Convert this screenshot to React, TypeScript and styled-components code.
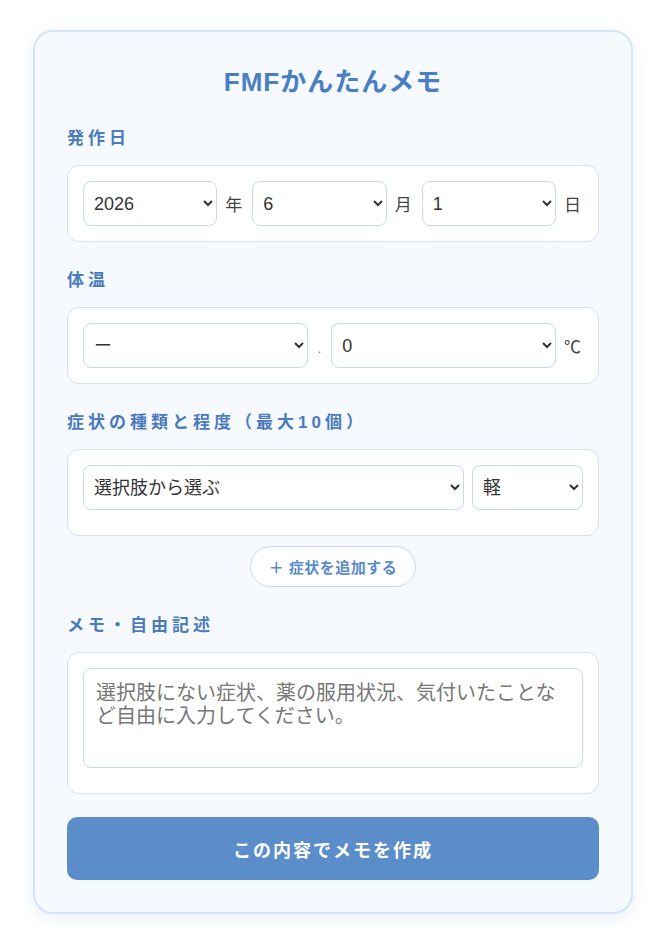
import styled, { createGlobalStyle } from 'styled-components';
import { useState } from 'react';

const GlobalStyle = createGlobalStyle`
    body {
        margin: 0;
        padding: 30px 0;
        background: #ffffff;
        font-family: 'Liberation Sans', 'Noto Sans CJK JP', sans-serif;
        color: #333;
    }
`;

const years = ['2024', '2025', '2026'];
const months = Array.from({ length: 12 }, (_, i) => String(i + 1));
const days = Array.from({ length: 31 }, (_, i) => String(i + 1));
const tempInts = ['ー', '35', '36', '37', '38', '39', '40', '41'];
const tempDecs = Array.from({ length: 10 }, (_, i) => String(i));
const levels = ['軽', '中', '重'];

const App = () => {
    const [year, setYear] = useState('2026');
    const [month, setMonth] = useState('6');
    const [day, setDay] = useState('1');

    return (
        <>
            <GlobalStyle />
            <Card>
                <Title>FMFかんたんメモ</Title>

                <SectionLabel>発作日</SectionLabel>
                <Panel>
                    <Row>
                        <Select value={year} onChange={(e) => setYear(e.target.value)}>
                            {years.map((y) => (
                                <option key={y}>{y}</option>
                            ))}
                        </Select>
                        <Unit>年</Unit>
                        <Select value={month} onChange={(e) => setMonth(e.target.value)}>
                            {months.map((m) => (
                                <option key={m}>{m}</option>
                            ))}
                        </Select>
                        <Unit>月</Unit>
                        <Select value={day} onChange={(e) => setDay(e.target.value)}>
                            {days.map((d) => (
                                <option key={d}>{d}</option>
                            ))}
                        </Select>
                        <Unit>日</Unit>
                    </Row>
                </Panel>

                <SectionLabel>体温</SectionLabel>
                <Panel>
                    <Row>
                        <Select defaultValue='ー'>
                            {tempInts.map((t) => (
                                <option key={t}>{t}</option>
                            ))}
                        </Select>
                        <Dot>.</Dot>
                        <Select defaultValue='0'>
                            {tempDecs.map((t) => (
                                <option key={t}>{t}</option>
                            ))}
                        </Select>
                        <Unit>℃</Unit>
                    </Row>
                </Panel>

                <SectionLabel>症状の種類と程度（最大10個）</SectionLabel>
                <Panel $tail>
                    <Row>
                        <Select defaultValue=''>
                            <option value=''>選択肢から選ぶ</option>
                            <option>発熱</option>
                            <option>腹痛</option>
                            <option>胸痛</option>
                            <option>関節痛</option>
                        </Select>
                        <Select $width={111} defaultValue='軽'>
                            {levels.map((l) => (
                                <option key={l}>{l}</option>
                            ))}
                        </Select>
                    </Row>
                </Panel>
                <AddRow>
                    <AddButton type='button'>＋ 症状を追加する</AddButton>
                </AddRow>

                <SectionLabel>メモ・自由記述</SectionLabel>
                <Panel $tail>
                    <MemoArea placeholder='選択肢にない症状、薬の服用状況、気付いたことなど自由に入力してください。' />
                </Panel>

                <SubmitButton type='button'>この内容でメモを作成</SubmitButton>
            </Card>
        </>
    );
};

const Card = styled.div`
    width: 600px;
    box-sizing: border-box;
    margin: 0 auto;
    padding: 34px 32px 32px;
    background: #f6f9fe;
    border: 2px solid #d5e4f7;
    border-radius: 20px;
    box-shadow: 0 4px 14px rgba(74, 127, 193, 0.12);
    display: flex;
    flex-direction: column;
`;

const Title = styled.h1`
    margin: 0 0 27px;
    text-align: center;
    font-size: 26px;
    line-height: 32px;
    letter-spacing: 1px;
    font-weight: 700;
    color: #4a7fc3;
`;

const SectionLabel = styled.div`
    font-size: 17px;
    line-height: 24px;
    font-weight: 700;
    letter-spacing: 4px;
    color: #4a7bbf;
    padding-top: 2px;
    margin-bottom: 14px;
`;

const Panel = styled.div<{ $tail?: boolean }>`
    background: #ffffff;
    border: 1px solid #d3e1f2;
    border-radius: 12px;
    padding: 15px 15px ${(p) => (p.$tail ? '25px' : '15px')};
    margin-bottom: ${(p) => (p.$tail ? '10px' : '25px')};
`;

const Row = styled.div`
    display: flex;
    align-items: center;
    gap: 8px;
`;

const Select = styled.select<{ $width?: number }>`
    flex: ${(p) => (p.$width ? `0 0 ${p.$width}px` : '1 1 0')};
    min-width: 0;
    height: 45px;
    box-sizing: border-box;
    padding: 0 6px 0 6px;
    font-family: 'Liberation Sans', 'Noto Sans CJK JP', sans-serif;
    font-size: 18px;
    color: #333;
    background: #ffffff;
    border: 1px solid #c8d9ee;
    border-radius: 8px;
`;

const Unit = styled.span`
    flex: 0 0 auto;
    font-family: 'Noto Sans CJK JP', sans-serif;
    font-size: 17px;
    color: #444;
    padding-right: 2px;
`;

const Dot = styled.span`
    flex: 0 0 auto;
    font-size: 12px;
    color: #666;
    padding: 6px 2px 0;
`;

const AddRow = styled.div`
    display: flex;
    justify-content: center;
    margin-bottom: 25px;
`;

const AddButton = styled.button`
    height: 41px;
    padding: 0 18px;
    background: #ffffff;
    border: 1px solid #c8d9ee;
    border-radius: 21px;
    font-family: 'Liberation Sans', 'Noto Sans CJK JP', sans-serif;
    font-size: 15px;
    font-weight: 700;
    letter-spacing: 0.5px;
    color: #5a8ac8;
`;

const MemoArea = styled.textarea`
    display: block;
    width: 100%;
    height: 100px;
    box-sizing: border-box;
    padding: 13px 12px;
    font-family: 'Liberation Sans', 'Noto Sans CJK JP', sans-serif;
    font-size: 20px;
    line-height: 23px;
    color: #333;
    border: 1px solid #c8d9ee;
    border-radius: 8px;
    resize: none;

    &::placeholder {
        color: #777;
    }
`;

const SubmitButton = styled.button`
    margin-top: 13px;
    height: 63px;
    width: 100%;
    background: #5b8dcb;
    border: none;
    border-radius: 10px;
    font-family: 'Liberation Sans', 'Noto Sans CJK JP', sans-serif;
    font-size: 18px;
    font-weight: 700;
    letter-spacing: 2px;
    color: #ffffff;
`;

export default App;
